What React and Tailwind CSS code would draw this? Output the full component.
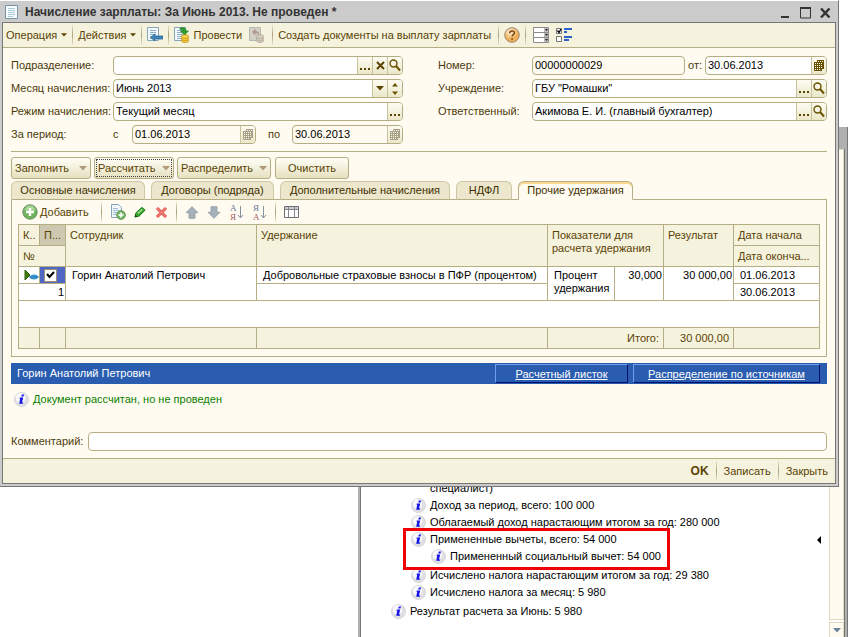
import { useState } from "react";

const fieldBox =
  "flex h-[19px] min-w-0 items-stretch overflow-hidden rounded-[4px] border border-[#b5ad84]";
const fieldInput = "w-full min-w-0 flex-1 bg-transparent px-[2px] text-black outline-none";
const fieldBtn =
  "flex w-[15px] shrink-0 items-center justify-center border-l border-[#c9c39d] bg-gradient-to-b from-[#fdfcf3] to-[#ebe7c9] text-[#5c4600]";
const flatBtn = "flex h-[22px] items-center whitespace-nowrap text-[#594304]";

/* ---------- small icons ---------- */

function Dots() {
  return (
    <svg width="11" height="13" viewBox="0 0 11 13" fill="#5c4600">
      <path d="M0 9h2v2H0zM4 9h2v2H4zM8 9h2v2H8z" />
    </svg>
  );
}

function Search() {
  return (
    <svg width="12" height="13" viewBox="0 0 12 13" fill="none" stroke="#6b5200">
      <circle cx="4.5" cy="4.5" r="3.5" strokeWidth="1.4" />
      <path d="M7 7l4 4.5" strokeWidth="2" />
    </svg>
  );
}

function Cross() {
  return (
    <svg width="9" height="9" viewBox="0 0 9 9" stroke="#5c4600" strokeWidth="2">
      <path d="M1 1l7 7M8 1L1 8" />
    </svg>
  );
}

function Caret({ color = "#5c4600", width = 8, height = 5 }) {
  return (
    <svg width={width} height={height} viewBox="0 0 8 5" fill={color}>
      <path d="M0 0h8L4 4.6z" />
    </svg>
  );
}

function Spin() {
  return (
    <svg width="6" height="12" viewBox="0 0 6 12" fill="#6b5200">
      <path d="M0 3.5L3 0l3 3.5zM0 8.5h6L3 12z" />
    </svg>
  );
}

function Calendar({ color = "#6b5200" }) {
  return (
    <svg width="10" height="11" viewBox="0 0 10 11" fill={color}>
      <path d="M3 0h7v9H8v2H0V2h3z" />
      <path
        d="M4 1h1v1H4zM6 1h1v1H6zM8 1h1v1H8zM1 3h1v1H1zM3 3h1v1H3zM5 3h1v1H5zM7 3h1v1H7zM1 5h1v1H1zM3 5h1v1H3zM5 5h1v1H5zM7 5h1v1H7zM1 7h1v1H1zM3 7h1v1H3zM5 7h1v1H5zM7 7h1v1H7zM1 9h1v1H1zM3 9h1v1H3zM5 9h1v1H5z"
        fill="#fbf8e6"
      />
    </svg>
  );
}

function Page() {
  return (
    <g>
      <path d="M.5.5h11v13H.5z" fill="#f3f9fd" stroke="#8aa5b8" />
      <path d="M3 3.5h6M3 5.5h6M3 7.5h6M3 9.5h6M3 11.5h5" stroke="#8fb0c5" />
    </g>
  );
}

function DocIcon() {
  return (
    <svg width="13" height="15" viewBox="0 0 13 15" className="shrink-0">
      <path d="M.5.5h12v13H.5z" fill="#f6fbff" stroke="#7d93a3" />
      <path d="M3 3.5h7M3 5.5h7M3 7.5h7M3 9.5h7M3 11.5h5" stroke="#aecbdc" />
    </svg>
  );
}

function BackIcon() {
  return (
    <svg width="16" height="16" viewBox="0 0 16 16">
      <Page />
      <path d="M3.5 10.500L8 7v2h8v3H8v2z" fill="#3d86bb" stroke="#24618f" strokeWidth="0.7" />
    </svg>
  );
}

function Coins({ light = "#f7d648", dark = "#c08a10" }) {
  return (
    <g fill={light} stroke={dark} strokeWidth="0.8">
      <ellipse cx="11" cy="13.6" rx="3.6" ry="1.9" />
      <ellipse cx="11" cy="11.6" rx="3.6" ry="1.9" />
      <ellipse cx="11" cy="9.6" rx="3.6" ry="1.9" />
    </g>
  );
}

function PostIcon() {
  return (
    <svg width="16" height="16" viewBox="0 0 16 16">
      <Page />
      <path d="M6 1c4-1 6 0 6 3h2.5l-4 4-4-4H9c0-1-1-1.500-3-1.500z" fill="#2fa02b" stroke="#157015" strokeWidth="0.6" />
      <Coins />
    </svg>
  );
}

function UnpostIcon() {
  return (
    <svg width="16" height="16" viewBox="0 0 16 16">
      <path d="M.5.5h11v13H.5z" fill="#d3d0c8" stroke="#b9b7b0" />
      <path d="M3 5l3.500-3.500V4c3 0 4 2 3 5 0-2-1-3-3-3v2.500z" fill="#b19690" />
      <Coins light="#d6d0bf" dark="#aaa595" />
    </svg>
  );
}

function HelpIcon() {
  return (
    <svg width="16" height="16" viewBox="0 0 16 16">
      <defs>
        <radialGradient id="help" cx="40%" cy="30%">
          <stop offset="0" stopColor="#fff3dc" />
          <stop offset="1" stopColor="#f0ad55" />
        </radialGradient>
      </defs>
      <circle cx="8" cy="8" r="7.300" fill="url(#help)" stroke="#9d8a78" />
      <path d="M5.700 6.300c0-3.200 4.700-3 4.700-.4 0 1.800-2.300 1.700-2.300 3.600M8.100 11v1.700" fill="none" stroke="#7a4a15" strokeWidth="1.500" />
    </svg>
  );
}

function ListIcon() {
  return (
    <svg width="16" height="16" viewBox="0 0 16 16">
      {[0, 5, 10].map((y) => (
        <g key={y}>
          <path d={`M.5 ${y + 0.5}h15v5H.5z`} fill="#fff" stroke="#8b8b8b" />
          <path d={`M11 ${y + 1}h4v4h-4z`} fill="#bdbdbd" />
          <path d={`M12 ${y + 2}h3l-1.500 2z`} fill="#222" />
        </g>
      ))}
    </svg>
  );
}

function SettingsIcon() {
  return (
    <svg width="16" height="15" viewBox="0 0 16 15">
      <path d="M.5.5h5v5h-5zM.5 8.500h5v5h-5z" fill="#fff" stroke="#777" />
      <path d="M1.500 2.500l1.500 2L5 1" stroke="#000" fill="none" strokeWidth="1.300" />
      <path d="M8 0h8v2H8zM8 3h3v2H8zM8 8h8v2H8zM8 11h5v2H8z" fill="#2b62c9" />
    </svg>
  );
}

function InfoIcon() {
  return (
    <svg width="15" height="15" viewBox="0 0 15 15" className="shrink-0">
      <circle cx="7.500" cy="7.500" r="7" fill="#dfdfe4" stroke="#d6d6da" />
      <circle cx="6.500" cy="5.800" r="4.800" fill="#f8f8fb" />
      <path d="M7.800 2.500h2.200l-.5 2H7.300zM5.800 5.500h3.400l-1.200 5h1.200l-.3 1.300H5.200l1-5h-.7z" fill="#1414e6" />
    </svg>
  );
}

function AddIcon() {
  return (
    <svg width="16" height="16" viewBox="0 0 16 16">
      <circle cx="8" cy="8" r="7.200" fill="#6fb35c" stroke="#6f8f68" />
      <path d="M2.500 6.500a5.500 5 0 0 1 11 0z" fill="#a6d396" />
      <path d="M8 4v8M4 8h8" stroke="#fff" strokeWidth="2.400" />
    </svg>
  );
}

function CopyIcon() {
  return (
    <svg width="16" height="16" viewBox="0 0 16 16">
      <path d="M1.500.5h7l3 3v10h-10z" fill="#f0f7fc" stroke="#87a3b6" />
      <path d="M3 4.500h5M3 6.500h6M3 8.500h4M3 10.500h3" stroke="#9ebbd0" />
      <circle cx="11" cy="11" r="4.300" fill="#79b968" stroke="#588f4d" />
      <path d="M11 8.500v5M8.500 11h5" stroke="#fff" strokeWidth="1.600" />
    </svg>
  );
}

function PencilIcon() {
  return (
    <svg width="13" height="14" viewBox="0 0 14 14">
      <path d="M1 12.500l1-4.500 6.500-6 3.500 3-6.500 6.500z" fill="#35a52a" stroke="#1c7417" />
      <path d="M4 8.500L9 4" stroke="#a8e49a" strokeWidth="1.400" />
      <path d="M1 12.500l.5-2.500 2 2z" fill="#123c0e" />
    </svg>
  );
}

function DeleteIcon() {
  return (
    <svg width="13" height="13" viewBox="0 0 13 13" fill="none">
      <path d="M2 2l9 9M11 2l-9 9" stroke="#d94a43" strokeWidth="3" />
      <path d="M2 2l9 9M11 2l-9 9" stroke="#f3827a" strokeWidth="1.400" />
    </svg>
  );
}

function ArrowIcon({ down }) {
  return (
    <svg width="14" height="13" viewBox="0 0 14 13" className={down ? "rotate-180" : ""}>
      <path d="M7 .7l6 6H10v5.600H4V6.700H1z" fill="#a7b1bb" stroke="#8d99a5" strokeWidth="0.800" />
    </svg>
  );
}

function SortIcon({ top, bottom }) {
  return (
    <svg width="15" height="18" viewBox="0 0 15 18">
      <text x="1" y="8" fontSize="9" fill="#66759a" fontFamily="Liberation Serif, serif">{top}</text>
      <text x="1" y="17" fontSize="9" fill="#a06060" fontFamily="Liberation Serif, serif">{bottom}</text>
      <path d="M11.500 3v12M9 12l2.500 3 2.500-3" stroke="#8492a2" fill="none" />
    </svg>
  );
}

function GridIcon() {
  return (
    <svg width="15" height="12" viewBox="0 0 15 12">
      <path d="M.5.5h14v11H.5z" fill="#fff" stroke="#6d6d72" />
      <path d="M1 1h13v2H1z" fill="#c9c9cf" />
      <path d="M1 3.500h13M4.500 1v10M10.500 1v10" stroke="#85858c" />
    </svg>
  );
}

function Sep() {
  return <span className="h-[20px] w-px shrink-0 bg-gradient-to-b from-[#e9e5cb] via-[#a9a27c] to-[#e9e5cb]" />;
}

/* ---------- form parts ---------- */

function TextField({ id, value = "", className = "", bg = "bg-white", children }) {
  return (
    <div className={`${fieldBox} ${bg} ${className}`}>
      <input id={id} type="text" defaultValue={value} className={fieldInput} />
      {children}
    </div>
  );
}

function IconButton({ label, children }) {
  return (
    <button type="button" aria-label={label} className={fieldBtn}>
      {children}
    </button>
  );
}

function Label({ htmlFor, className = "", children }) {
  return (
    <label htmlFor={htmlFor} className={`shrink-0 whitespace-nowrap ${className}`}>
      {children}
    </label>
  );
}

function PushButton({ className, caret, focused, children }) {
  return (
    <button
      type="button"
      className={`relative flex h-[22px] items-center rounded-[3px] border border-[#b5ad84] bg-gradient-to-b from-[#fffef6] to-[#e6e1c0] text-[#594304] ${className}`}
    >
      {focused && <span className="absolute inset-px border border-dotted border-[#444]" />}
      {children}
      {caret && (
        <span className="ml-auto">
          <Caret color="#b09a78" />
        </span>
      )}
    </button>
  );
}

const tabs = [
  { name: "Основные начисления", width: "w-[134px]" },
  { name: "Договоры (подряда)", width: "w-[123px]" },
  { name: "Дополнительные начисления", width: "w-[170px]" },
  { name: "НДФЛ", width: "w-[56px]" },
  { name: "Прочие удержания", width: "w-[115px]" },
];

function Tabs() {
  const [active, setActive] = useState(4);
  return (
    <div role="tablist" className="relative z-10 -mb-px flex gap-[6px]">
      {tabs.map((tab, i) => (
        <button
          key={tab.name}
          type="button"
          role="tab"
          aria-selected={i === active}
          onClick={() => setActive(i)}
          className={`h-[19px] whitespace-nowrap rounded-t-[6px] border ${tab.width} ${
            i === active
              ? "border-[#b5ad84] border-b-[#fffbf0] bg-[#fffbf0] text-[#3f2f00] shadow-[inset_0_2px_0_#fbd98f]"
              : "border-[#cdc7a4] border-b-[#b5ad84] bg-[#ebe6cc] text-[#3f2f00]"
          }`}
        >
          {tab.name}
        </button>
      ))}
    </div>
  );
}

function DeductionTable() {
  const th = "border border-[#b5ad84] px-1 pt-1 text-left align-top font-normal leading-[13px] whitespace-nowrap overflow-hidden";
  const td = "border border-[#b5ad84] pt-[2px] px-[6px] align-top leading-[13px] whitespace-nowrap overflow-hidden";
  const num = "border border-[#b5ad84] px-px pt-[2px] text-right align-top leading-[13px]";
  const empty = "border border-[#b5ad84]";
  return (
    <table className="w-full table-fixed border-collapse border border-[#b5ad84] bg-white text-black">
      <colgroup>
        <col className="w-[21px]" />
        <col className="w-[26px]" />
        <col className="w-[191px]" />
        <col />
        <col className="w-[67px]" />
        <col className="w-[49px]" />
        <col className="w-[70px]" />
        <col className="w-[86px]" />
      </colgroup>
      <thead className="bg-[#f5f2dd] text-[#594304]">
        <tr className="h-[21px]">
          <th className={th}>К..</th>
          <th className={`${th} bg-[#cdc9b1]`}>П...</th>
          <th rowSpan={2} className={th}>Сотрудник</th>
          <th rowSpan={2} className={th}>Удержание</th>
          <th colSpan={2} rowSpan={2} className={th}>
            Показатели для
            <br />
            расчета удержания
          </th>
          <th rowSpan={2} className={th}>Результат</th>
          <th className={th}>Дата начала</th>
        </tr>
        <tr className="h-[21px]">
          <th colSpan={2} className={th}>№</th>
          <th className={th}>Дата оконча...</th>
        </tr>
      </thead>
      <tbody>
        <tr className="h-[17px]">
          <td className="border border-[#b5ad84] p-0">
            <svg width="15" height="12" viewBox="0 0 15 12" className="ml-[5px]">
              <path d="M1 1l5 5-5 5z" fill="#3f7d12" stroke="#2c5c0b" />
              <ellipse cx="10" cy="8" rx="4" ry="2.500" fill="#3c97d3" />
              <path d="M5 8h10" stroke="#2a79b4" />
            </svg>
          </td>
          <td className="border border-[#b5ad84] bg-[#4f66c4] p-0">
            <input
              type="checkbox"
              defaultChecked
              aria-label="Включить строку"
              className="peer sr-only"
              id="row-check"
            />
            <label htmlFor="row-check" className="ml-1 flex h-[13px] w-[13px] items-center justify-center border border-[#9a9270] bg-white">
              <svg width="9" height="8" viewBox="0 0 9 8" fill="none" stroke="#000" strokeWidth="2">
                <path d="M1 3l2.500 3L8 1" />
              </svg>
            </label>
          </td>
          <td rowSpan={2} className={td}>Горин Анатолий Петрович</td>
          <td className={td}>Добровольные страховые взносы в ПФР (процентом)</td>
          <td rowSpan={2} className={td}>
            Процент
            <br />
            удержания
          </td>
          <td rowSpan={2} className={num}>30,000</td>
          <td rowSpan={2} className={num}>30 000,00</td>
          <td className={td}>01.06.2013</td>
        </tr>
        <tr className="h-[17px]">
          <td colSpan={2} className={num}>1</td>
          <td className={td}></td>
          <td className={td}>30.06.2013</td>
        </tr>
        <tr className="h-[27px]">
          <td colSpan={8}></td>
        </tr>
      </tbody>
      <tfoot className="bg-[#f5f2dd] text-[#594304]">
        <tr className="h-[21px]">
          <td className={empty}></td>
          <td className={empty}></td>
          <td className={empty}></td>
          <td className={empty}></td>
          <td colSpan={2} className="border border-[#b5ad84] px-1 text-right leading-[13px]">Итого:</td>
          <td className="border border-[#b5ad84] px-1 text-right leading-[13px]">30 000,00</td>
          <td className={empty}></td>
        </tr>
      </tfoot>
    </table>
  );
}

/* ---------- payroll document window ---------- */

function PayrollWindow() {
  return (
    <div className="absolute top-0 left-0 right-[9px] z-20 border-t border-t-white border-r border-b border-r-[#777] border-b-[#777] bg-[#cbcbcb] pr-[2px] pb-[2px] pl-[2px]">
      <header className="flex h-[21px] items-center gap-[7px] pt-[2px] pr-[5px] pl-[3px]">
        <DocIcon />
        <h1 className="flex-1 whitespace-nowrap text-[12px] font-bold text-[#333]">
          Начисление зарплаты: За Июнь 2013. Не проведен *
        </h1>
        <div className="flex items-center gap-[9px]">
          <button type="button" aria-label="Свернуть">
            <svg width="11" height="13" viewBox="0 0 11 13"><path d="M1 10h8v2H1z" fill="#333" /></svg>
          </button>
          <button type="button" aria-label="Развернуть">
            <svg width="11" height="12" viewBox="0 0 11 12"><path d="M.5 1h10v10H.5z" fill="none" stroke="#333" /><path d="M0 0h11v2H0z" fill="#333" /></svg>
          </button>
          <button type="button" aria-label="Закрыть окно">
            <svg width="11" height="10" viewBox="0 0 11 10" stroke="#333" strokeWidth="2.400"><path d="M1 .5l8.500 9M9.500.5L1 9.500" /></svg>
          </button>
        </div>
      </header>

      <div className="border border-[#777] bg-[#fffbf0]">
        {/* COMMAND BAR */}
        <div className="flex h-[25px] items-center gap-[5px] border-b border-[#b5ad84] bg-[#f5f2dd] pl-[3px]">
          <button type="button" className={`${flatBtn} gap-1`}>Операция <Caret width={6} height={4} /></button>
          <Sep />
          <button type="button" className={`${flatBtn} gap-1`}>Действия <Caret width={6} height={4} /></button>
          <Sep />
          <button type="button" aria-label="Перейти" className={flatBtn}><BackIcon /></button>
          <Sep />
          <button type="button" className={`${flatBtn} gap-[3px]`}><PostIcon />Провести</button>
          <button type="button" aria-label="Отмена проведения" className={`${flatBtn} px-[2px]`}><UnpostIcon /></button>
          <Sep />
          <button type="button" className={`${flatBtn} pr-[2px]`}>Создать документы на выплату зарплаты</button>
          <Sep />
          <button type="button" aria-label="Справка" className={flatBtn}><HelpIcon /></button>
          <Sep />
          <button type="button" aria-label="Список" className={`${flatBtn} px-[2px]`}><ListIcon /></button>
          <button type="button" aria-label="Настройка" className={flatBtn}><SettingsIcon /></button>
        </div>

        <div className="px-2 pt-2 pb-[7px]">
          {/* DOCUMENT FIELDS */}
          <div className="flex gap-[35px] border-b border-[#b5ad84] pb-[7px]">
            <div className="flex w-[392px] shrink-0 flex-col gap-1">
              <div className="flex items-center">
                <Label htmlFor="dept" className="w-[102px]">Подразделение:</Label>
                <TextField id="dept" className="flex-1">
                  <IconButton label="Выбрать"><Dots /></IconButton>
                  <IconButton label="Очистить"><Cross /></IconButton>
                  <IconButton label="Открыть"><Search /></IconButton>
                </TextField>
              </div>
              <div className="flex items-center">
                <Label htmlFor="month" className="w-[102px]">Месяц начисления:</Label>
                <TextField id="month" value="Июнь 2013" className="flex-1">
                  <IconButton label="Список"><Caret /></IconButton>
                  <IconButton label="Изменить"><Spin /></IconButton>
                </TextField>
              </div>
              <div className="flex items-center">
                <Label htmlFor="mode" className="w-[102px]">Режим начисления:</Label>
                <TextField id="mode" value="Текущий месяц" className="flex-1">
                  <IconButton label="Выбрать"><Dots /></IconButton>
                </TextField>
              </div>
              <div className="flex items-center">
                <span className="w-[102px]">За период:</span>
                <Label htmlFor="from" className="w-[19px]">с</Label>
                <TextField id="from" value="01.06.2013" className="w-[124px]" bg="bg-[#fffbf0]">
                  <IconButton label="Календарь"><Calendar color="#a8a28a" /></IconButton>
                </TextField>
                <Label htmlFor="to" className="w-[36px] pl-3">по</Label>
                <TextField id="to" value="30.06.2013" className="flex-1" bg="bg-[#fffbf0]">
                  <IconButton label="Календарь"><Calendar color="#a8a28a" /></IconButton>
                </TextField>
              </div>
            </div>

            <div className="flex min-w-0 flex-1 flex-col gap-1">
              <div className="flex items-center">
                <Label htmlFor="number" className="w-[94px]">Номер:</Label>
                <TextField id="number" value="00000000029" className="flex-1" bg="bg-[#fffbf0]" />
                <Label htmlFor="date" className="w-[20px] pl-[3px]">от:</Label>
                <TextField id="date" value="30.06.2013" className="w-[122px]">
                  <IconButton label="Календарь"><Calendar /></IconButton>
                </TextField>
              </div>
              <div className="flex items-center">
                <Label htmlFor="org" className="w-[94px]">Учреждение:</Label>
                <TextField id="org" value={'ГБУ "Ромашки"'} className="flex-1">
                  <IconButton label="Выбрать"><Dots /></IconButton>
                  <IconButton label="Открыть"><Search /></IconButton>
                </TextField>
              </div>
              <div className="flex items-center">
                <Label htmlFor="person" className="w-[94px]">Ответственный:</Label>
                <TextField id="person" value="Акимова Е. И. (главный бухгалтер)" className="flex-1">
                  <IconButton label="Выбрать"><Dots /></IconButton>
                  <IconButton label="Открыть"><Search /></IconButton>
                </TextField>
              </div>
            </div>
          </div>

          {/* ACTIONS */}
          <div className="mt-[5px] mb-[2px] flex gap-[3px]">
            <PushButton className="w-[80px] px-[3px]" caret>Заполнить</PushButton>
            <PushButton className="w-[80px] px-[3px]" caret focused>Рассчитать</PushButton>
            <PushButton className="w-[94px] px-[3px]" caret>Распределить</PushButton>
            <PushButton className="ml-px w-[74px] justify-center">Очистить</PushButton>
          </div>

          <Tabs />

          <section className="border border-[#b5ad84] px-[6px] pb-[7px]">
            <div className="flex h-[24px] items-center gap-2 pl-1">
              <button type="button" className={`${flatBtn} gap-[2px]`}>
                <AddIcon />
                <span><u>Д</u>обавить</span>
              </button>
              <span className="ml-1 flex"><Sep /></span>
              <button type="button" aria-label="Скопировать"><CopyIcon /></button>
              <button type="button" aria-label="Изменить строку"><PencilIcon /></button>
              <button type="button" aria-label="Удалить"><DeleteIcon /></button>
              <Sep />
              <button type="button" aria-label="Вверх"><ArrowIcon /></button>
              <button type="button" aria-label="Вниз"><ArrowIcon down /></button>
              <button type="button" aria-label="По возрастанию"><SortIcon top="А" bottom="Я" /></button>
              <button type="button" aria-label="По убыванию"><SortIcon top="Я" bottom="А" /></button>
              <Sep />
              <button type="button" aria-label="Колонки"><GridIcon /></button>
            </div>
            <DeductionTable />
          </section>

          {/* EMPLOYEE BAND */}
          <div className="mt-[6px] flex h-[21px] items-center gap-[5px] bg-[#2a5db0] pr-[7px] pl-[6px] text-white">
            <span className="flex-1">Горин Анатолий Петрович</span>
            <a href="#slip" className="h-[19px] w-[133px] border border-t-[#6f9df0] border-r-[#03106b] border-b-[#03106b] border-l-[#6f9df0] text-center leading-[18px] underline">
              Расчетный листок
            </a>
            <a href="#sources" className="h-[19px] w-[187px] border border-t-[#6f9df0] border-r-[#03106b] border-b-[#03106b] border-l-[#6f9df0] text-center leading-[18px] underline">
              Распределение по источникам
            </a>
          </div>

          <p className="mt-2 flex items-center gap-1 pl-[3px] text-[#0a8000]">
            <InfoIcon />
            Документ рассчитан, но не проведен
          </p>

          <div className="mt-[25px] flex items-center">
            <Label htmlFor="comment" className="w-[77px]">Комментарий:</Label>
            <TextField id="comment" className="flex-1" />
          </div>
        </div>

        <footer className="flex h-[25px] items-center justify-end gap-[7px] border-t border-[#b5ad84] bg-[#f5f2dd] pr-[7px]">
          <button type="button" className={`${flatBtn} text-[12px] font-bold`}>OK</button>
          <Sep />
          <button type="button" className={flatBtn}>Записать</button>
          <Sep />
          <button type="button" className={flatBtn}>Закрыть</button>
        </footer>
      </div>
    </div>
  );
}

/* ---------- calculation report behind the document ---------- */

function ReportLine({ className = "", children }) {
  return (
    <p className={`flex h-[17px] items-center gap-1 whitespace-nowrap ${className}`}>
      <InfoIcon />
      {children}
    </p>
  );
}

function ReportWindow() {
  return (
    <div className="absolute top-[127px] right-0 bottom-0 left-[358px] flex flex-col border-r border-l-2 border-r-[#777] border-l-[#b0b0b0] bg-[#b0b0b0] pr-[2px] text-black">
      <div className="h-[22px] shrink-0" />
      <div className="flex min-h-0 flex-1 border-r border-l border-[#777] bg-white">
        <div className="flex min-w-0 flex-1 flex-col justify-end pb-[17px] pl-[30px]">
          <p className="pl-[39px] leading-[17px]">специалист)</p>
          <ReportLine className="pl-5">Доход за период, всего: 100 000</ReportLine>
          <ReportLine className="pl-5">Облагаемый доход нарастающим итогом за год: 280 000</ReportLine>
          <div className="relative mb-[2px]">
            <ReportLine className="pl-5">Примененные вычеты, всего: 54 000</ReportLine>
            <ReportLine className="pl-10">Примененный социальный вычет: 54 000</ReportLine>
            <span className="absolute -top-[3px] -bottom-[5px] left-3 w-[267px] border-3 border-[#f00000]" />
            <svg width="4" height="8" viewBox="0 0 4 8" className="absolute top-[5px] right-2"><path d="M4 0v8L0 4z" /></svg>
          </div>
          <ReportLine className="pl-5">Исчислено налога нарастающим итогом за год: 29 380</ReportLine>
          <ReportLine className="pl-5">Исчислено налога за месяц: 5 980</ReportLine>
          <ReportLine className="mt-[2px]">Результат расчета за Июнь: 5 980</ReportLine>
        </div>
        <div className="flex w-[15px] shrink-0 flex-col gap-[2px]">
          <div className="flex-1 border border-[#dedabf] bg-[#fffbf0]" />
          <button type="button" aria-label="Прокрутить вниз" className="flex h-[15px] items-center justify-center border border-b-0 border-[#dedabf] bg-[#fffbf0]">
            <Caret color="#6c8299" />
          </button>
        </div>
      </div>
    </div>
  );
}

export default function App() {
  return (
    <main className="relative min-h-screen overflow-hidden bg-white font-['Liberation_Sans',Arial,sans-serif] text-[11px] leading-[15px] text-[#4a3a0a]">
      <ReportWindow />
      <PayrollWindow />
    </main>
  );
}
